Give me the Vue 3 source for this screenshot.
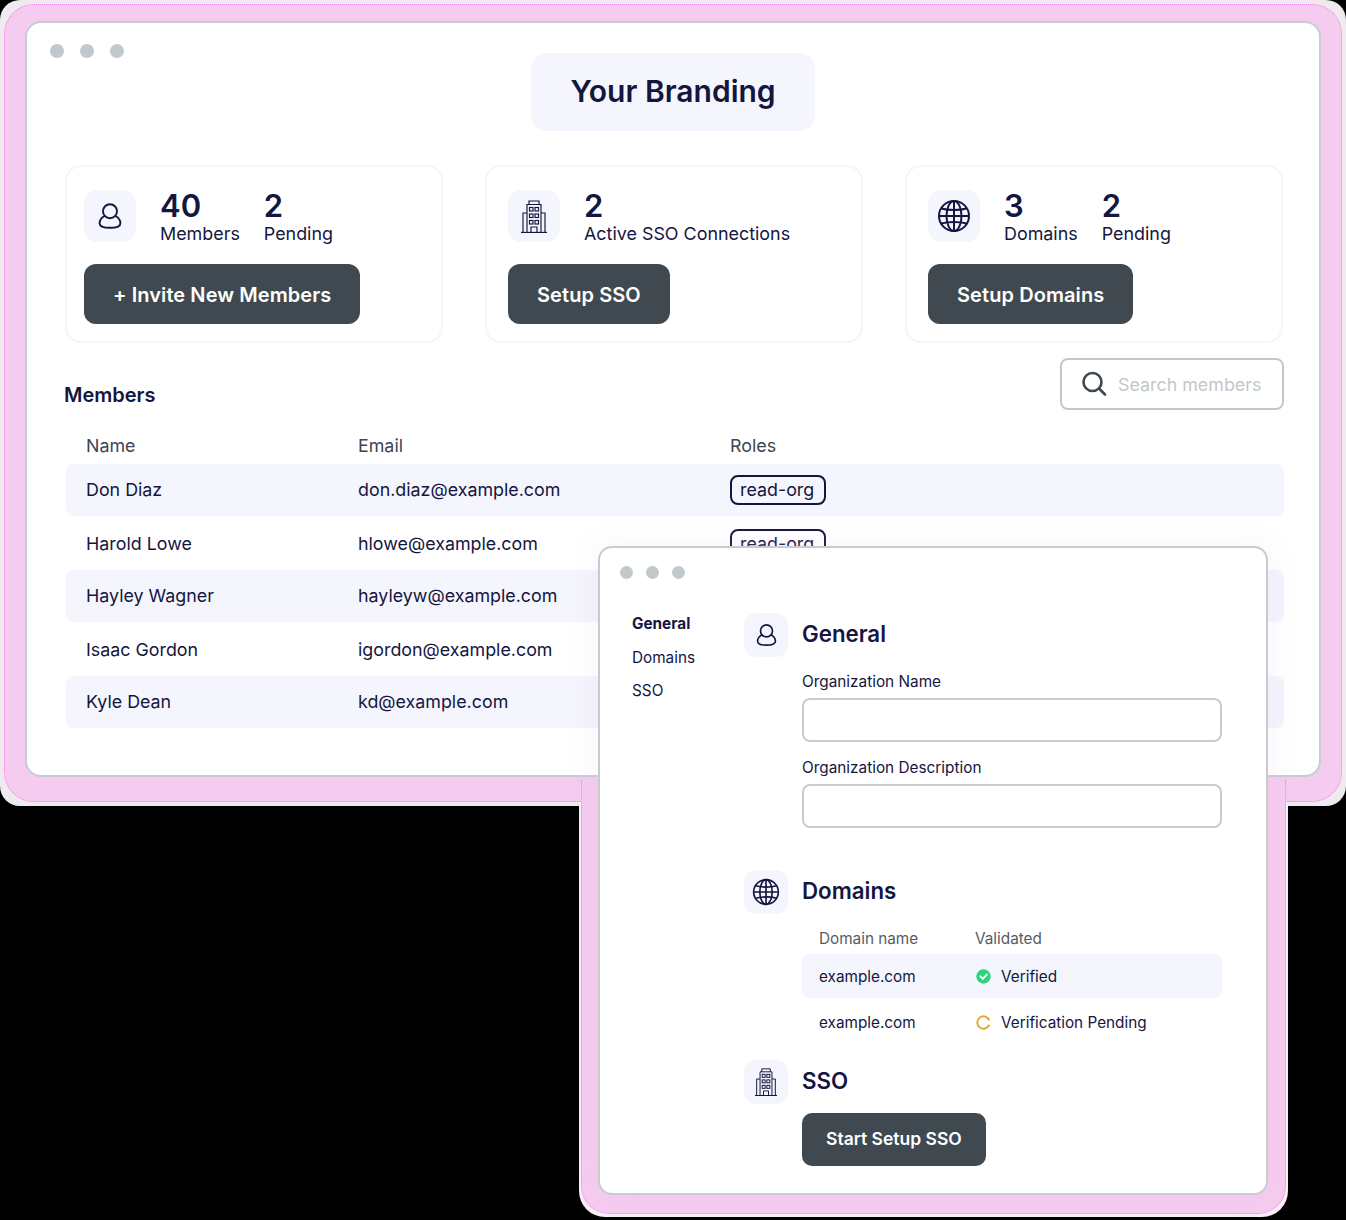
<script setup>
const stats = [
  { icon: 'user', w: 24, h: 28, first: true, items: [['40', 'Members'], ['2', 'Pending']], action: '+ Invite New Members' },
  { icon: 'building', w: 28, h: 33, items: [['2', 'Active SSO Connections']], action: 'Setup SSO' },
  { icon: 'globe', w: 34, h: 34, items: [['3', 'Domains'], ['2', 'Pending']], action: 'Setup Domains' }
]
const members = [
  ['Don Diaz', 'don.diaz@example.com'],
  ['Harold Lowe', 'hlowe@example.com'],
  ['Hayley Wagner', 'hayleyw@example.com'],
  ['Isaac Gordon', 'igordon@example.com'],
  ['Kyle Dean', 'kd@example.com']
]
</script>

<template>
  <div class="stage">
    <svg class="defs" aria-hidden="true">
      <symbol id="user" viewBox="0 0 24 28">
        <circle cx="12" cy="9.2" r="7" fill="none" stroke="#14163f" stroke-width="1.9" />
        <path d="M6.6 14C3.4 15.6 1.6 18.6 1.6 21.2C1.6 24.4 5 25.8 12 25.8C19 25.8 22.4 24.4 22.4 21.2C22.4 18.6 20.6 15.6 17.4 14" fill="none" stroke="#14163f" stroke-width="1.9" stroke-linecap="round" />
      </symbol>
      <symbol id="building" viewBox="0 0 28 33">
        <g fill="none" stroke="#14163f" stroke-width="1.15">
          <path d="M1 32.5H27" stroke-width="1.3" />
          <path d="M3 32.5V13H7M25 32.5V13H21" />
          <path d="M7 32.5V4.5H21V32.5" />
          <path d="M9 4.5V1H19V4.5" />
          <rect x="9.5" y="7.5" width="3.5" height="3.5" />
          <rect x="15" y="7.5" width="3.5" height="3.5" />
          <rect x="9.5" y="14" width="3.5" height="3.5" />
          <rect x="15" y="14" width="3.5" height="3.5" />
          <rect x="9.5" y="20.5" width="3.5" height="3.5" />
          <rect x="15" y="20.5" width="3.5" height="3.5" />
          <path d="M11 32.5V27H17V32.5" />
        </g>
      </symbol>
      <symbol id="globe" viewBox="0 0 34 34">
        <g fill="none" stroke="#14163f" stroke-width="2">
          <circle cx="17" cy="17" r="15" />
          <ellipse cx="17" cy="17" rx="7.5" ry="15" />
          <path d="M17 2V32M2 17H32" />
          <path d="M4.5 9.5C11 11.5 23 11.5 29.5 9.5M4.5 24.5C11 22.5 23 22.5 29.5 24.5" />
        </g>
      </symbol>
    </svg>

    <div class="backdrop backdrop-main"></div>
    <div class="backdrop backdrop-side"></div>
    <div class="halo halo-main"></div>
    <div class="halo halo-side"></div>

    <section class="window window-main">
      <div class="dots"><i></i><i></i><i></i></div>
      <h1 class="brand">Your Branding</h1>

      <div class="cards">
        <article v-for="card in stats" :key="card.action" class="card" :class="{ 'card-first': card.first }">
          <div class="card-top">
            <div class="tile">
              <svg :width="card.w" :height="card.h"><use :href="'#' + card.icon" /></svg>
            </div>
            <div v-for="item in card.items" :key="item[1]" class="stat">
              <strong>{{ item[0] }}</strong>
              <span>{{ item[1] }}</span>
            </div>
          </div>
          <button class="action">{{ card.action }}</button>
        </article>
      </div>

      <div class="members-head">
        <h2>Members</h2>
        <div class="search">
          <svg width="26" height="26" viewBox="0 0 26 26" fill="none" stroke="#40494f" stroke-width="2.6" stroke-linecap="round">
            <circle cx="10.5" cy="11" r="9" />
            <path d="M17.5 18L23 23.5" />
          </svg>
          <span>Search members</span>
        </div>
      </div>

      <div class="table">
        <div class="thead"><span>Name</span><span>Email</span><span>Roles</span></div>
        <div v-for="(m, i) in members" :key="m[0]" class="row" :class="{ shaded: i % 2 === 0 }">
          <span>{{ m[0] }}</span>
          <span>{{ m[1] }}</span>
          <span><em class="badge">read-org</em></span>
        </div>
      </div>
    </section>

    <section class="window window-side">
      <div class="dots dots-small"><i></i><i></i><i></i></div>
      <div class="settings">
        <nav class="side-nav">
          <a class="active">General</a>
          <a>Domains</a>
          <a>SSO</a>
        </nav>
        <div class="panel">
          <div class="panel-head">
            <div class="tile tile-small"><svg width="21" height="24"><use href="#user" /></svg></div>
            <h3>General</h3>
          </div>
          <div class="panel-body">
            <label class="field-label first-label">Organization Name</label>
            <div class="input"></div>
            <label class="field-label">Organization Description</label>
            <div class="input"></div>
          </div>

          <div class="panel-head domains-head">
            <div class="tile tile-small"><svg width="28" height="28"><use href="#globe" /></svg></div>
            <h3>Domains</h3>
          </div>
          <div class="panel-body">
            <div class="dhead"><span>Domain name</span><span>Validated</span></div>
            <div class="drow shaded">
              <span>example.com</span>
              <span class="status">
                <svg width="15" height="15" viewBox="0 0 15 15">
                  <circle cx="7.5" cy="7.5" r="7.2" fill="#2bd47d" />
                  <path d="M4.3 7.4L6.8 9.9L10.8 5.6" fill="none" stroke="#fff" stroke-width="2" stroke-linecap="round" stroke-linejoin="round" />
                </svg>
                Verified
              </span>
            </div>
            <div class="drow drow-second">
              <span>example.com</span>
              <span class="status">
                <svg width="15" height="15" viewBox="0 0 15 15">
                  <path d="M13 4.7A6.2 6.2 0 1 0 13 10.3" fill="none" stroke="#e6a83c" stroke-width="2" stroke-linecap="round" />
                </svg>
                Verification Pending
              </span>
            </div>
          </div>

          <div class="panel-head sso-head">
            <div class="tile tile-small"><svg width="24" height="28"><use href="#building" /></svg></div>
            <h3>SSO</h3>
          </div>
          <div class="panel-body">
            <button class="action action-small">Start Setup SSO</button>
          </div>
        </div>
      </div>
    </section>
  </div>
</template>

<style scoped>
.stage {
  position: relative;
  width: 1346px;
  height: 1220px;
  overflow: hidden;
  background: #000;
  font-family: Inter, "Liberation Sans", sans-serif;
  color: #14163f;
}
.defs {
  position: absolute;
  width: 0;
  height: 0;
}
.backdrop {
  position: absolute;
  background: #eeeaee;
}
.backdrop-main {
  left: 0;
  top: 0;
  width: 1346px;
  height: 806px;
  border-radius: 20px;
}
.backdrop-side {
  left: 579px;
  top: 780px;
  width: 709px;
  height: 437px;
  border-radius: 0 0 26px 26px;
  background: #f6eff6;
}
.halo {
  position: absolute;
  background: #f6cbf0;
  box-sizing: border-box;
}
.halo-main {
  left: 4px;
  top: 4px;
  width: 1338px;
  height: 798px;
  border-radius: 30px;
  border: 1px dotted #ee7fe6;
}
.halo-side {
  left: 581px;
  top: 780px;
  width: 705px;
  height: 434px;
  border-radius: 0 0 28px 28px;
  border: 1px dotted #ee7fe6;
  border-top: 0;
}
.window {
  position: absolute;
  box-sizing: border-box;
  background: #fff;
  border: 2px solid #c7ccd3;
}
.window-main {
  left: 25px;
  top: 21px;
  width: 1296px;
  height: 756px;
  border-radius: 16px;
  padding: 21px 0 0 38px;
}
.window-side {
  left: 598px;
  top: 546px;
  width: 670px;
  height: 649px;
  border-radius: 14px;
  border-color: #c9cccf;
  padding: 18px 0 0 20px;
  box-shadow: 0 0 28px rgba(226, 190, 226, 0.22);
}
.dots {
  display: flex;
  gap: 16px;
  height: 14px;
  margin-left: -15px;
}
.dots i {
  width: 14px;
  height: 14px;
  border-radius: 50%;
  background: #c2c9cc;
}
.dots-small {
  gap: 13px;
  height: 13px;
  margin-left: 0;
}
.dots-small i {
  width: 13px;
  height: 13px;
}
.brand {
  box-sizing: border-box;
  width: 284px;
  height: 78px;
  margin: -5px 0 0 466px;
  border-radius: 16px;
  background: #f4f5fd;
  font-size: 30px;
  font-weight: 600;
  line-height: 76px;
  text-align: center;
}
.cards {
  display: grid;
  grid-template-columns: repeat(3, 378px);
  column-gap: 42px;
  margin-top: 34px;
}
.card {
  box-sizing: border-box;
  height: 178px;
  padding: 21px 21px 0;
  border: 2px solid #f5f6fb;
  border-radius: 16px;
}
.card-first {
  padding-left: 17px;
}
.card-top {
  display: flex;
  align-items: center;
  height: 56px;
}
.tile {
  display: flex;
  align-items: center;
  justify-content: center;
  flex: none;
  width: 52px;
  height: 52px;
  margin-right: 24px;
  border-radius: 14px;
  background: #f4f5fd;
}
.tile-small {
  width: 44px;
  height: 44px;
  margin-right: 14px;
  border-radius: 12px;
}
.stat {
  display: flex;
  flex-direction: column;
  margin: 2px 24px 0 0;
}
.stat strong {
  font-size: 31px;
  font-weight: 600;
  line-height: 34px;
}
.stat span {
  font-size: 17.9px;
  line-height: 22px;
}
.action {
  display: block;
  height: 60px;
  margin-top: 20px;
  padding: 2px 29px 0;
  border: 0;
  border-radius: 12px;
  background: #40494f;
  color: #fff;
  font-family: inherit;
  font-size: 20px;
  font-weight: 600;
  letter-spacing: 0.08px;
}
.action-small {
  height: 53px;
  margin-top: 9px;
  padding: 0 24px 3px;
  border-radius: 10px;
  font-size: 17.5px;
  letter-spacing: 0;
}
.members-head {
  display: flex;
  align-items: flex-end;
  justify-content: space-between;
  width: 1220px;
  margin: 15px 0 0 -1px;
}
.members-head h2 {
  margin: 0 0 3px;
  font-size: 20px;
  font-weight: 600;
  line-height: 24px;
}
.search {
  box-sizing: border-box;
  display: flex;
  align-items: center;
  gap: 10px;
  width: 224px;
  height: 52px;
  padding-left: 20px;
  border: 2px solid #c6c6c6;
  border-radius: 8px;
  color: #c3c7cb;
  font-size: 17.85px;
}
.table {
  width: 1218px;
  margin-left: 1px;
  font-size: 17.85px;
}
.thead,
.row {
  display: grid;
  grid-template-columns: 272px 372px 1fr;
  align-items: center;
  padding-left: 20px;
}
.thead {
  height: 36px;
  padding-top: 17px;
  padding-bottom: 1px;
  color: #3d4552;
}
.row {
  box-sizing: border-box;
  height: 52px;
  padding-bottom: 1px;
  margin-bottom: 1px;
  border-radius: 8px;
}
.row:not(.shaded) {
  padding-top: 1px;
  padding-bottom: 0;
}
.shaded {
  background: #f4f5fd;
}
.badge {
  box-sizing: border-box;
  display: inline-block;
  height: 30px;
  padding: 0 10px 0 8px;
  border: 2px solid #14163f;
  border-radius: 8px;
  font-style: normal;
  line-height: 26px;
}
.settings {
  display: flex;
  margin-top: 34px;
}
.side-nav {
  display: flex;
  flex-direction: column;
  flex: none;
  width: 124px;
  box-sizing: border-box;
  padding-left: 12px;
  margin-top: -6px;
  font-size: 15.3px;
}
.side-nav a {
  height: 33.5px;
  line-height: 33.5px;
}
.side-nav .active {
  font-weight: 700;
}
.panel {
  width: 478px;
}
.panel-head {
  display: flex;
  align-items: center;
}
.panel-head h3 {
  margin: 0;
  padding-bottom: 4px;
  font-size: 22.3px;
  font-weight: 600;
}
.panel-body {
  width: 420px;
  margin-left: 58px;
}
.field-label {
  display: block;
  margin: 16px 0 6px;
  font-size: 15.35px;
  line-height: 20px;
}
.first-label {
  margin-top: 15px;
}
.input {
  box-sizing: border-box;
  height: 44px;
  border: 2px solid #cbcbcb;
  border-radius: 8px;
}
.domains-head {
  margin-top: 42px;
}
.sso-head {
  margin-top: 16px;
}
.dhead,
.drow {
  display: grid;
  grid-template-columns: 156px 1fr;
  align-items: center;
  padding-left: 17px;
  font-size: 15.3px;
}
.dhead {
  height: 20px;
  margin: 14px 0 6px;
  color: #555b63;
}
.drow {
  height: 44px;
  border-radius: 8px;
}
.drow-second {
  margin-top: 2px;
}
.status {
  display: flex;
  align-items: center;
  gap: 10px;
  padding-left: 1px;
}
</style>

<style>
html,
body {
  background: #000;
}
</style>
